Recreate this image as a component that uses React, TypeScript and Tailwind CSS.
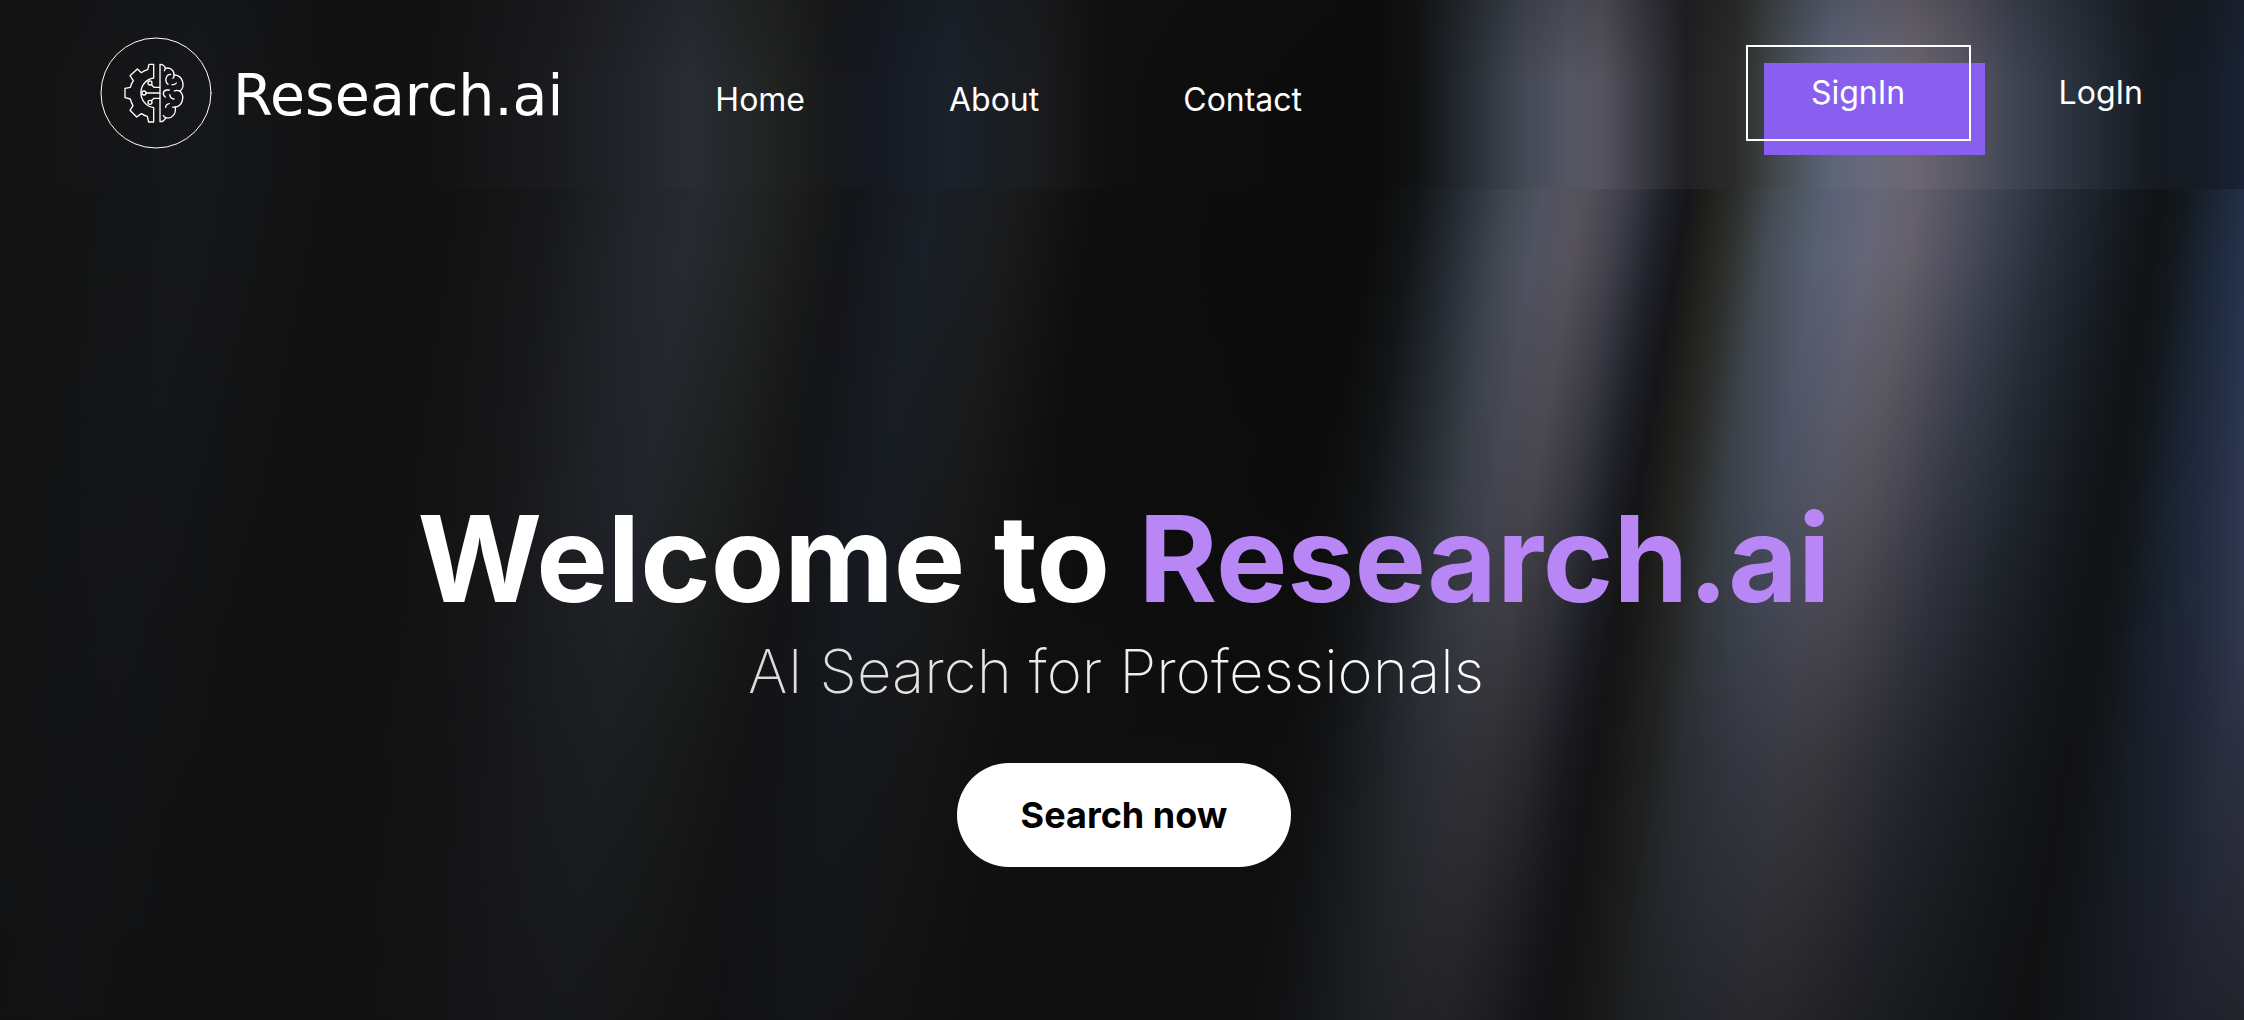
const streaks: [number, string][] = [
  [0, "#131313"], [86, "#131415"], [186, "#15171a"], [315, "#121212"], [430, "#111111"],
  [544, "#17181a"], [630, "#22252b"], [687, "#262a31"], [758, "#202322"], [808, "#181918"],
  [844, "#14151a"], [923, "#191f27"], [1000, "#1a1b1c"], [1088, "#0e0e0e"], [1345, "#0b0b0b"],
  [1370, "#0c0c0c"], [1410, "#131618"], [1450, "#252b33"], [1498, "#414751"], [1535, "#505361"],
  [1573, "#56525c"], [1613, "#40404b"], [1653, "#20222b"], [1679, "#16161a"], [1699, "#1f1e1b"],
  [1733, "#2f322f"], [1766, "#444c55"], [1819, "#596074"], [1866, "#656678"], [1906, "#65616c"],
  [1939, "#575563"], [1992, "#3c4150"], [2046, "#272e39"], [2112, "#161b22"], [2152, "#111315"],
  [2179, "#141a20"], [2212, "#1c2739"], [2260, "#2b3754"], [2310, "#454f72"], [2400, "#5c5c78"],
];

const headerStreaks: [number, string][] = [
  [0, "#131313"], [200, "#15171a"], [350, "#111111"], [430, "#121212"], [560, "#1a1b1f"],
  [690, "#282c34"], [770, "#212421"], [830, "#17181a"], [870, "#151821"], [950, "#19212a"],
  [1040, "#1a1b1d"], [1110, "#0f0f0f"], [1380, "#0b0b0b"], [1420, "#121415"], [1465, "#252b32"],
  [1525, "#444955"], [1570, "#545663"], [1602, "#56535e"], [1645, "#383842"], [1685, "#202024"],
  [1735, "#2a2c29"], [1780, "#454b50"], [1830, "#5d6478"], [1870, "#68697b"], [1915, "#6b6671"],
  [1960, "#5a5865"], [2015, "#3f4453"], [2080, "#28303b"], [2150, "#161b22"], [2200, "#151a24"],
  [2244, "#1a2335"],
];

function Backdrop() {
  return (
    <svg
      aria-hidden="true"
      className="absolute inset-0 h-full w-full"
      viewBox="0 0 2244 1020"
      preserveAspectRatio="none"
    >
      <defs>
        <linearGradient id="streaks" gradientUnits="userSpaceOnUse" x1="0" y1="0" x2="2400" y2="0" gradientTransform="translate(41 0) skewX(-9.4)">
          {streaks.map(([x, c]) => <stop key={x} offset={x / 2400} stopColor={c} />)}
        </linearGradient>
        <linearGradient id="top-streaks" gradientUnits="userSpaceOnUse" x1="0" y1="0" x2="2244" y2="0">
          {headerStreaks.map(([x, c]) => <stop key={x} offset={x / 2244} stopColor={c} />)}
        </linearGradient>
        <linearGradient id="fade" x1="0" y1="0" x2="0" y2="1">
          <stop offset="0" stopColor="#111112" stopOpacity="0.2" />
          <stop offset="0.08" stopColor="#111112" stopOpacity="0" />
          <stop offset="0.25" stopColor="#111112" stopOpacity="0" />
          <stop offset="0.49" stopColor="#111112" stopOpacity="0.22" />
          <stop offset="0.75" stopColor="#111112" stopOpacity="0.54" />
          <stop offset="1" stopColor="#111112" stopOpacity="0.74" />
        </linearGradient>
      </defs>
      <rect width="2244" height="1020" fill="url(#streaks)" />
      <rect width="2244" height="189" fill="url(#top-streaks)" />
      <rect width="2244" height="1020" fill="url(#fade)" />
    </svg>
  );
}

function Logo() {
  return (
    <svg
      aria-hidden="true"
      className="size-[114px] shrink-0"
      viewBox="28 33 342 342"
      fill="none"
      stroke="white"
      strokeLinejoin="round"
      strokeLinecap="round"
    >
      <circle cx="199" cy="204" r="165" strokeWidth="3" />
      <g strokeWidth="4">
        <path d="M192 118H178L174 134Q163 137 155 143L143 132L121 152L131 167Q125 176 122 187L106 190V218L122 222Q125 234 130 242L121 256L141 276L155 266Q164 272 173 274L177 291H192V248A45 45 0 0 1 192 159Z" />
        <circle cx="181" cy="174" r="6" />
        <circle cx="163" cy="204" r="6" />
        <circle cx="181" cy="232" r="6" />
        <path d="M185 179L193 187H210M169 204H210M185 227L193 220H210" />
        <path d="M211 118V290C220 290 225 286 228 278C246 284 262 264 256 246C276 246 288 216 271 199C288 184 280 150 253 150C254 136 242 126 227 130C225 122 220 118 211 118Z" />
        <path d="M243 148C228 148 224 168 235 178M253 150Q254 156 250 160M247 179Q256 180 260 174M271 199Q262 194 254 198M232 195C220 196 217 208 227 216M232 195H239M240 209Q242 221 253 222M228 247Q229 237 239 236M256 246Q252 248 249 246M227 130Q227 134 224 137M228 278Q223 276 221 272" />
      </g>
    </svg>
  );
}

const navLinks = ["Home", "About", "Contact"];

export default function App() {
  return (
    <div className="relative flex min-h-screen flex-col bg-[#111111] font-['Inter',sans-serif] text-white">
      <Backdrop />
      <header className="relative flex h-[189px] items-start pt-9 pr-[101px] pl-[99px]">
        <a href="#home" className="flex items-center gap-5">
          <Logo />
          <span className="pt-1 font-['DejaVu_Sans',sans-serif] text-[57px] leading-[64px]">Research.ai</span>
        </a>
        <nav className="ml-[152px] flex gap-36 pt-10 text-[32px] leading-[48px]">
          {navLinks.map((label) => (
            <a key={label} href={`#${label.toLowerCase()}`}>{label}</a>
          ))}
        </nav>
        <div className="ml-auto flex pt-[9px] text-[32px] leading-[48px]">
          <button type="button" className="relative h-24 w-[225px]">
            <span aria-hidden="true" className="absolute top-[18px] left-[18px] h-[92px] w-[221px] bg-[#885fef]" />
            <span aria-hidden="true" className="absolute inset-0 border-2 border-white" />
            <span className="relative">SignIn</span>
          </button>
          <a href="#login" className="ml-[88px] pt-6">LogIn</a>
        </div>
      </header>
      <main className="relative flex flex-1 flex-col items-center pt-[310px] pl-1">
        <h1 className="text-[120px] leading-[120px] font-bold">
          Welcome to <span className="text-[#b987f5]">Research.ai</span>
        </h1>
        <p className="mt-3.5 mr-4 bg-linear-to-r from-[#dadada] to-white bg-clip-text text-[60px] leading-[76px] font-extralight text-transparent">
          AI Search for Professionals
        </p>
        <button type="button" className="mt-[54px] h-[104px] rounded-full bg-white px-16 text-[36px] leading-[56px] font-bold text-black">
          Search now
        </button>
      </main>
    </div>
  );
}
